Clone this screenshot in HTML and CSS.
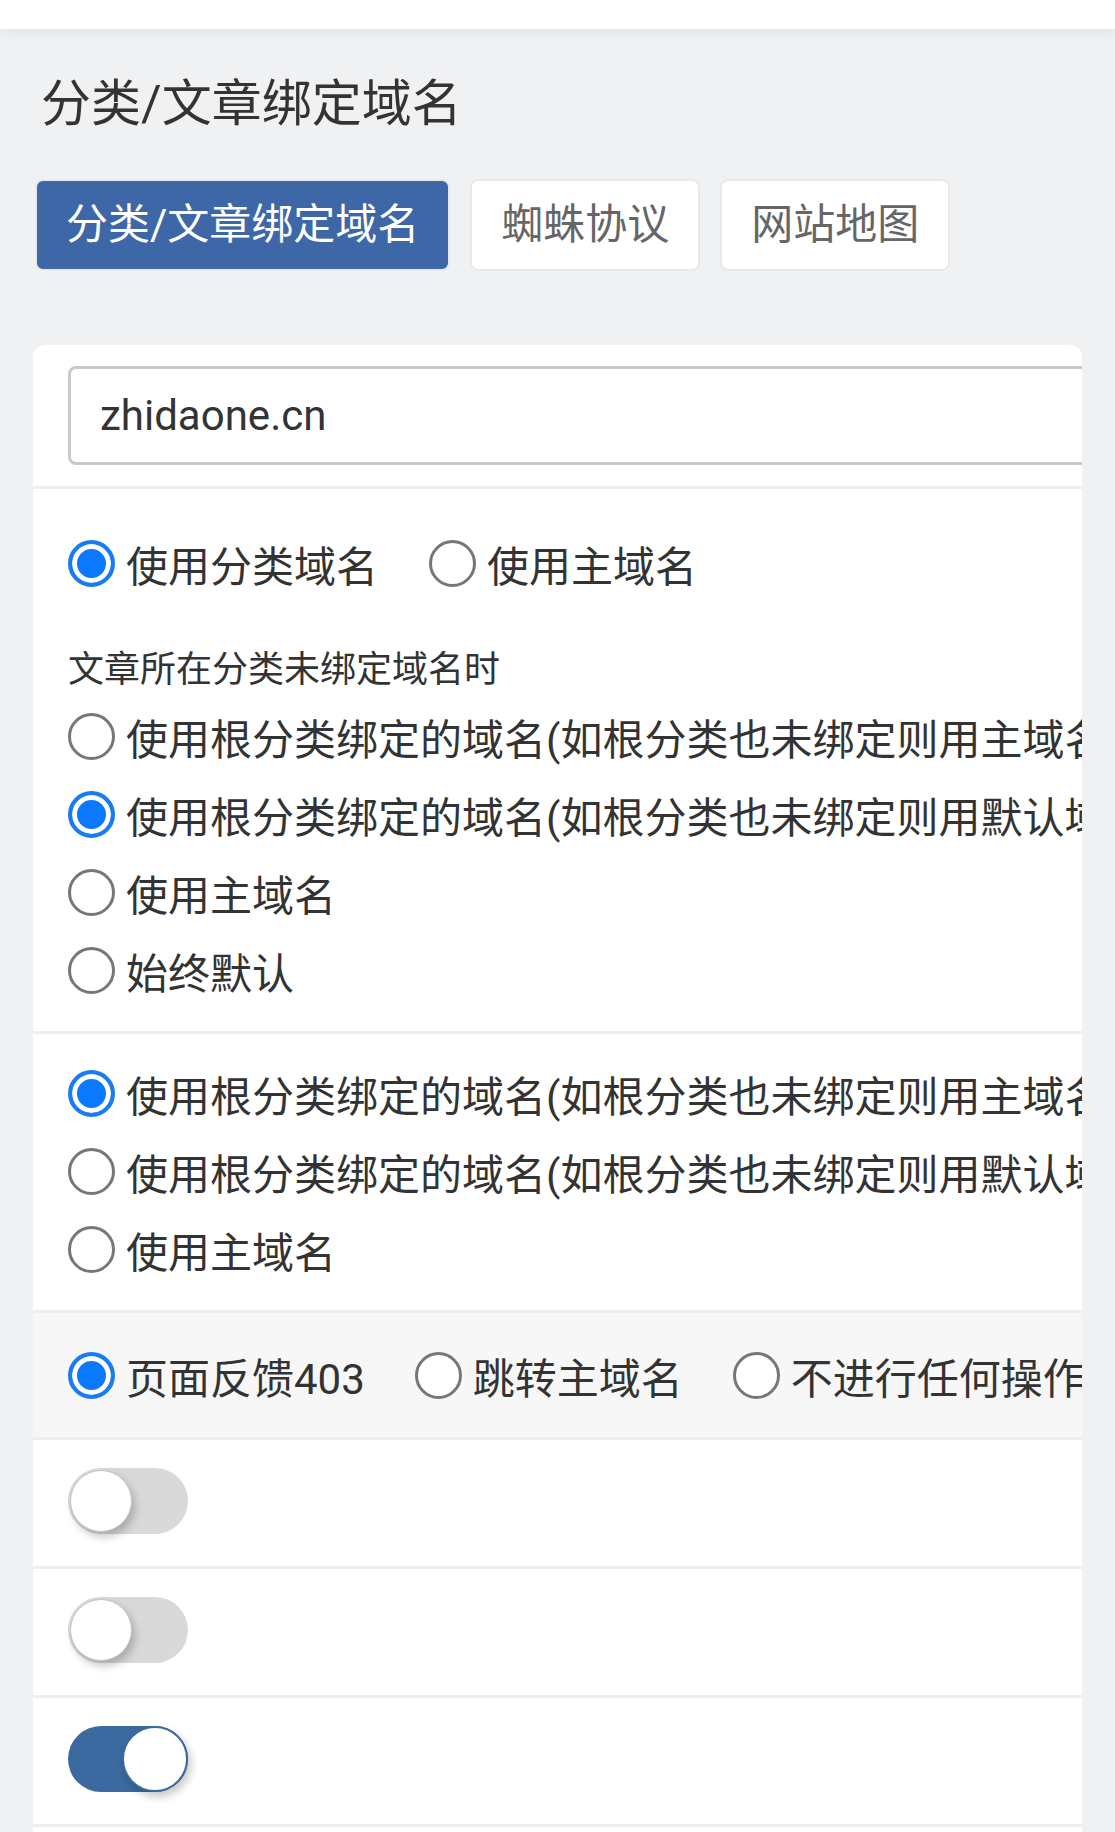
FILE: index.html
```html
<!DOCTYPE html>
<html lang="zh-CN">
<head>
    <meta charset="UTF-8">
    <meta name="viewport" content="width=device-width, initial-scale=1.0">
    <title>分类/文章绑定域名</title>
    <link rel="stylesheet" href="styles.css">
</head>
<body>
    <div class="topbar"></div>

    <div class="page">
        <h2 class="title">分类/文章绑定域名</h2>

        <div class="tabs">
            <a class="tab active" href="#">分类/文章绑定域名</a>
            <a class="tab" href="#">蜘蛛协议</a>
            <a class="tab" href="#">网站地图</a>
        </div>

        <div class="card">
            <!-- 主域名 -->
            <div class="row row-input">
                <input class="domain" type="text" value="zhidaone.cn">
            </div>

            <!-- 域名模式 -->
            <div class="row row-mode">
                <div class="inline-group">
                    <label class="radio"><input type="radio" name="mode" checked><span>使用分类域名</span></label>
                    <label class="radio"><input type="radio" name="mode"><span>使用主域名</span></label>
                </div>
                <p class="hint">文章所在分类未绑定域名时</p>
                <div class="stack">
                    <label class="radio"><input type="radio" name="article"><span>使用根分类绑定的域名(如根分类也未绑定则用主域名)</span></label>
                    <label class="radio"><input type="radio" name="article" checked><span>使用根分类绑定的域名(如根分类也未绑定则用默认域名)</span></label>
                    <label class="radio"><input type="radio" name="article"><span>使用主域名</span></label>
                    <label class="radio"><input type="radio" name="article"><span>始终默认</span></label>
                </div>
            </div>

            <!-- 分类未绑定 -->
            <div class="row row-list">
                <div class="stack">
                    <label class="radio"><input type="radio" name="category" checked><span>使用根分类绑定的域名(如根分类也未绑定则用主域名)</span></label>
                    <label class="radio"><input type="radio" name="category"><span>使用根分类绑定的域名(如根分类也未绑定则用默认域名)</span></label>
                    <label class="radio"><input type="radio" name="category"><span>使用主域名</span></label>
                </div>
            </div>

            <!-- 错误域名访问 -->
            <div class="row row-action">
                <div class="inline-group tight">
                    <label class="radio"><input type="radio" name="action" checked><span>页面反馈403</span></label>
                    <label class="radio"><input type="radio" name="action"><span>跳转主域名</span></label>
                    <label class="radio"><input type="radio" name="action"><span>不进行任何操作</span></label>
                </div>
            </div>

            <div class="row row-switch">
                <span class="switch"><span class="knob"></span></span>
            </div>
            <div class="row row-switch">
                <span class="switch"><span class="knob"></span></span>
            </div>
            <div class="row row-switch">
                <span class="switch on"><span class="knob"></span></span>
            </div>
            <div class="row row-switch">
                <span class="switch"><span class="knob"></span></span>
            </div>
        </div>
    </div>
</body>
</html>
```

FILE: styles.css
```css
body {
    margin: 0;
    background-color: #f0f1f3;
    font-family: Roboto, "Noto Sans CJK SC", sans-serif;
    color: #333;
}
.topbar {
    height: 29px;
    background-color: #fff;
    box-shadow: 0 4px 12px rgba(0, 0, 0, 0.06);
}
.page {
    padding: 0 33px;
}
.title {
    margin: 45px 0 0;
    padding-left: 8px;
    font-size: 50px;
    font-weight: normal;
    line-height: 60px;
    color: #333;
}
.tabs {
    display: flex;
    gap: 20px;
    margin: 45px 0 0 2px;
}
.tab {
    display: flex;
    align-items: center;
    height: 92px;
    box-sizing: border-box;
    padding: 0 29px 9px;
    background-color: #fff;
    border: 2px solid #e8e9eb;
    border-radius: 8px;
    font-size: 42px;
    color: #666;
    text-decoration: none;
}
.tab.active {
    background-color: #3d67a7;
    color: #fff;
}
.card {
    display: flex;
    flex-direction: column;
    gap: 3px;
    margin-top: 74px;
    background-color: #eeeeef;
    border-radius: 12px 12px 0 0;
    overflow: hidden;
}
.row {
    background-color: #fff;
    padding-left: 35px;
    white-space: nowrap;
}
.row-input {
    padding-top: 21px;
    padding-bottom: 21px;
}
.domain {
    display: block;
    width: calc(100% + 60px);
    height: 99px;
    box-sizing: border-box;
    padding: 0 29px;
    border: 3px solid #c9c9c9;
    border-radius: 8px;
    font-family: Roboto, sans-serif;
    font-size: 42px;
    color: #333;
    outline: none;
}
.row-mode {
    padding-top: 35px;
    padding-bottom: 22px;
}
.row-list {
    padding-top: 20px;
    padding-bottom: 22px;
}
.row-action {
    background-color: #f7f7f7;
    padding-top: 23px;
    padding-bottom: 23px;
}
.inline-group {
    display: flex;
    gap: 51px;
    height: 78px;
}
.inline-group.tight {
    gap: 50px;
}
.stack {
    display: flex;
    flex-direction: column;
}
.stack .radio {
    height: 78px;
}
.hint {
    margin: 43px 0 2px;
    font-size: 36px;
    line-height: 50px;
}
.radio {
    display: flex;
    align-items: center;
    gap: 11px;
    font-size: 42px;
    color: #333;
}
.radio input {
    appearance: none;
    -webkit-appearance: none;
    flex: none;
    width: 47px;
    height: 47px;
    margin: 0;
    box-sizing: border-box;
    border: 3px solid #777;
    border-radius: 50%;
    background-color: #fff;
}
.radio input:checked {
    border: 4px solid #1a7cf5;
    background-color: #0a78ff;
    box-shadow: inset 0 0 0 5px #fff;
}
.row-switch {
    padding-top: 28px;
    padding-bottom: 32px;
}
.switch {
    display: flex;
    width: 120px;
    height: 66px;
    box-sizing: border-box;
    padding: 2px;
    border-radius: 33px;
    background-color: #d9d9d9;
}
.knob {
    width: 62px;
    height: 62px;
    box-sizing: border-box;
    border: 1px solid #c4c4c4;
    border-radius: 50%;
    background-color: #fff;
    box-shadow: 3px 5px 9px rgba(0, 0, 0, 0.22);
}
.switch.on {
    justify-content: flex-end;
    padding: 0;
    background-color: #3a6a9f;
}
.switch.on .knob {
    width: 66px;
    height: 66px;
    border: 2px solid #3a6a9f;
}
```
